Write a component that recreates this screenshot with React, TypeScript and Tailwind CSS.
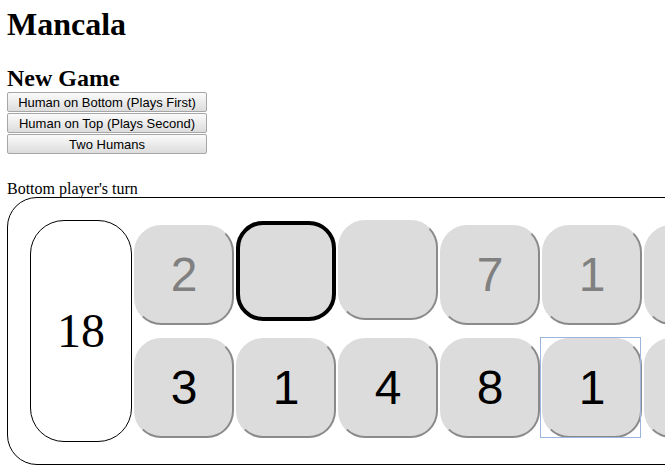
import React from "react";

const topPits = [
  { n: "2", state: "normal" },
  { n: "", state: "selected" },
  { n: "", state: "raised" },
  { n: "7", state: "normal" },
  { n: "1", state: "normal" },
  { n: "", state: "normal" },
];

const bottomPits = [
  { n: "3", focus: false },
  { n: "1", focus: false },
  { n: "4", focus: false },
  { n: "8", focus: false },
  { n: "1", focus: true },
  { n: "", focus: false },
];

function Pit({ n, gray, state, focus }: { n: string; gray?: boolean; state?: string; focus?: boolean }) {
  let cls =
    "w-[100px] h-[100px] rounded-[27px] bg-[#dcdcdc] flex items-center justify-center text-[48px] leading-none font-['Liberation_Sans',Arial,sans-serif] ";
  if (state === "selected") {
    cls += "border-4 border-black -translate-y-[4px]";
  } else {
    cls += "border-2 border-[#dcdcdc] border-r-[#8a8a8a] border-b-[#8a8a8a]";
    if (state === "raised") cls += " -translate-y-[5px]";
  }
  return (
    <div className="relative shrink-0">
      <div className={cls}>
        <span className={gray ? "text-[#808080]" : "text-black"}>{n}</span>
      </div>
      {focus && (
        <span className="absolute -left-[2px] -top-[1px] w-[101px] h-[101px] border border-[#9bb6de]" />
      )}
    </div>
  );
}

export default function App() {
  return (
    <div className="w-full h-[475px] overflow-hidden bg-white text-black font-['Liberation_Serif','Times_New_Roman',serif]">
      <div className="px-[7px] pt-[6px]">
        <h1 className="text-[32px] leading-[37px] font-bold">Mancala</h1>
        <h2 className="mt-[21px] text-[24px] leading-[28px] font-bold">New Game</h2>
        <div className="flex flex-col gap-[1px] w-[200px]">
          {["Human on Bottom (Plays First)", "Human on Top (Plays Second)", "Two Humans"].map((t) => (
            <button
              key={t}
              className="h-[20px] w-[200px] border border-[#a6a6a6] rounded-[2px] bg-gradient-to-b from-[#fbfbfb] to-[#dcdcdc] text-[13px] leading-none text-black font-['Liberation_Sans',Arial,sans-serif]"
            >
              {t}
            </button>
          ))}
        </div>
        <div className="mt-[26px] text-[16px] leading-[18px]">Bottom player's turn</div>
        <div className="-mt-[1px] w-max border border-black rounded-[30px] p-[22px] flex items-center gap-[2px]">
          <div className="w-[102px] h-[222px] shrink-0 border border-black rounded-[34px] flex items-center justify-center text-[48px] leading-none">
            18
          </div>
          <div className="flex flex-col gap-[13px]">
            <div className="flex gap-[2px]">
              {topPits.map((p, i) => (
                <Pit key={i} n={p.n} gray state={p.state} />
              ))}
            </div>
            <div className="flex gap-[2px]">
              {bottomPits.map((p, i) => (
                <Pit key={i} n={p.n} focus={p.focus} />
              ))}
            </div>
          </div>
          <div className="w-[102px] h-[222px] shrink-0 border border-black rounded-[34px]" />
        </div>
      </div>
    </div>
  );
}
